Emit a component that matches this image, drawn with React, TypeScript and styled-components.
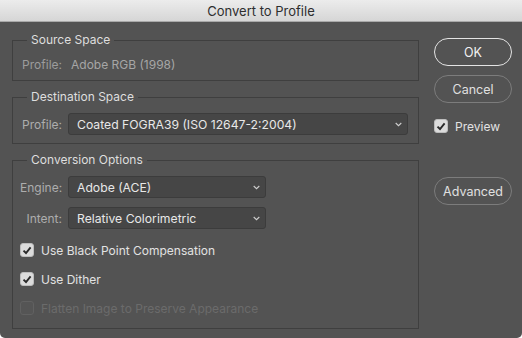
import styled, { createGlobalStyle } from "styled-components";

const GlobalStyle = createGlobalStyle`
  html, body {
    margin: 0;
    padding: 0;
    background: #ffffff;
  }
  body {
    font-family: Inter, "Liberation Sans", sans-serif;
    -webkit-font-smoothing: antialiased;
  }
`;

const Window = styled.div`
  width: 522px;
  height: 338px;
  display: flex;
  flex-direction: column;
  background-color: #535353;
  border-radius: 0 0 5px 5px;
  overflow: hidden;
`;

const TitleBar = styled.div`
  height: 21px;
  display: flex;
  align-items: center;
  justify-content: center;
  background: linear-gradient(#ececec, #d6d6d6);
  border-bottom: 1px solid #a9a9a9;
  color: #2e2e2e;
  font-size: 13px;
`;

const Body = styled.div`
  flex: 1;
  display: flex;
  gap: 15px;
  padding: 10px 10px 0 12px;
`;

const LeftColumn = styled.div`
  width: 407px;
  display: flex;
  flex-direction: column;
  gap: 8px;
`;

const RightColumn = styled.div`
  width: 78px;
  display: flex;
  flex-direction: column;
  padding-top: 6px;
`;

const Group = styled.fieldset<{ $tall?: boolean }>`
  margin: 0;
  padding: 8px 10px 8px 7px;
  border: 1px solid #3f3f3f;
  min-width: 0;
  display: flex;
  flex-direction: column;
  gap: 9px;
  ${(p) => (p.$tall ? "padding-bottom: 10px;" : "")}
`;

const Legend = styled.legend`
  margin-left: 7px;
  padding: 0 4px;
  font-size: 12px;
  line-height: 16px;
  color: #dedede;
`;

const Row = styled.div`
  display: flex;
  align-items: center;
  gap: 6px;
  height: 22px;
`;

const StaticRow = styled(Row)`
  height: 16px;
  gap: 9px;
`;

const Label = styled.span<{ $dim?: boolean }>`
  width: 42px;
  text-align: right;
  font-size: 12px;
  color: ${(p) => (p.$dim ? "#9c9c9c" : "#adadad")};
`;

const Value = styled.span`
  font-size: 12px;
  color: #a6a6a6;
`;

const Select = styled.div<{ $width: number }>`
  width: ${(p) => p.$width}px;
  height: 22px;
  box-sizing: border-box;
  display: flex;
  align-items: center;
  justify-content: space-between;
  padding: 0 5px 0 8px;
  background-color: #464646;
  border: 1px solid #3c3c3c;
  border-radius: 3px;
  color: #e8e8e8;
  font-size: 12.2px;
`;

const CheckRow = styled.label<{ $disabled?: boolean }>`
  display: flex;
  align-items: center;
  gap: 7px;
  height: 20px;
  font-size: 12px;
  color: ${(p) => (p.$disabled ? "#6b6b6b" : "#e2e2e2")};
`;

const CheckList = styled.div`
  display: flex;
  flex-direction: column;
  gap: 9px;
  padding-top: 2px;
`;

const Box = styled.span<{ $checked?: boolean; $disabled?: boolean }>`
  width: 14px;
  height: 14px;
  box-sizing: border-box;
  border-radius: 3px;
  display: flex;
  align-items: center;
  justify-content: center;
  background-color: ${(p) =>
    p.$disabled ? "#555555" : p.$checked ? "#dcdcdc" : "#4a4a4a"};
  border: 1px solid ${(p) => (p.$disabled ? "#616161" : "#bdbdbd")};
`;

const PillButton = styled.div<{ $primary?: boolean }>`
  height: 28px;
  box-sizing: border-box;
  display: flex;
  align-items: center;
  justify-content: center;
  border-radius: 14px;
  border: 1px solid ${(p) => (p.$primary ? "#e4e4e4" : "#7c7c7c")};
  color: ${(p) => (p.$primary ? "#f2f2f2" : "#e0e0e0")};
  font-size: 12.5px;
`;

const ButtonGap = styled.div<{ $h: number }>`
  height: ${(p) => p.$h}px;
`;

function Chevron() {
  return (
    <svg width="7" height="5" viewBox="0 0 7 5">
      <path d="M0.7 1 L3.5 3.7 L6.3 1" fill="none" stroke="#cfcfcf" strokeWidth="1.1" />
    </svg>
  );
}

function Check({ checked, disabled }: { checked?: boolean; disabled?: boolean }) {
  return (
    <Box $checked={checked} $disabled={disabled}>
      {checked && (
        <svg width="10" height="9" viewBox="0 0 10 9">
          <path d="M1.5 4.6 L4 7 L8.6 1.4" fill="none" stroke="#2a2a2a" strokeWidth="1.9" />
        </svg>
      )}
    </Box>
  );
}

export default function App() {
  return (
    <>
      <GlobalStyle />
      <Window>
        <TitleBar>Convert to Profile</TitleBar>
        <Body>
          <LeftColumn>
            <Group>
              <Legend>Source Space</Legend>
              <StaticRow>
                <Label $dim>Profile:</Label>
                <Value>Adobe RGB (1998)</Value>
              </StaticRow>
            </Group>
            <Group>
              <Legend>Destination Space</Legend>
              <Row>
                <Label>Profile:</Label>
                <Select $width={340}>
                  Coated FOGRA39 (ISO 12647-2:2004)
                  <Chevron />
                </Select>
              </Row>
            </Group>
            <Group $tall>
              <Legend>Conversion Options</Legend>
              <Row>
                <Label>Engine:</Label>
                <Select $width={198}>
                  Adobe (ACE)
                  <Chevron />
                </Select>
              </Row>
              <Row>
                <Label>Intent:</Label>
                <Select $width={198}>
                  Relative Colorimetric
                  <Chevron />
                </Select>
              </Row>
              <CheckList>
                <CheckRow>
                  <Check checked />
                  Use Black Point Compensation
                </CheckRow>
                <CheckRow>
                  <Check checked />
                  Use Dither
                </CheckRow>
                <CheckRow $disabled>
                  <Check disabled />
                  Flatten Image to Preserve Appearance
                </CheckRow>
              </CheckList>
            </Group>
          </LeftColumn>
          <RightColumn>
            <PillButton $primary>OK</PillButton>
            <ButtonGap $h={9} />
            <PillButton>Cancel</PillButton>
            <ButtonGap $h={13} />
            <CheckRow>
              <Check checked />
              Preview
            </CheckRow>
            <ButtonGap $h={41} />
            <PillButton>Advanced</PillButton>
          </RightColumn>
        </Body>
      </Window>
    </>
  );
}
